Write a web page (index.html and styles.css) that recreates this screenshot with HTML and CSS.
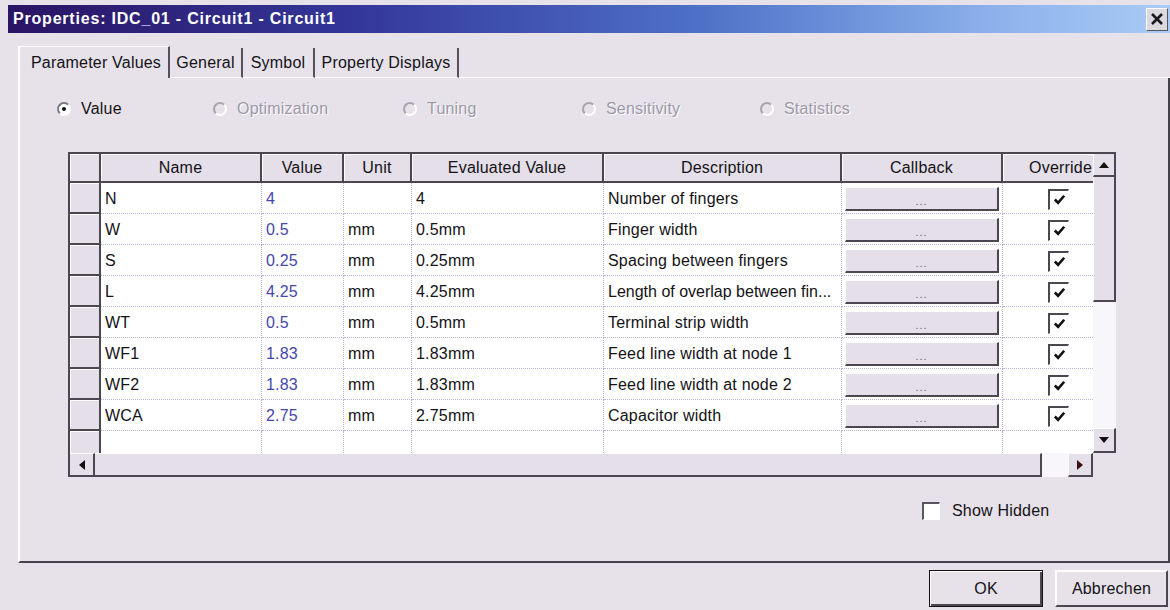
FILE: index.html
```html
<!DOCTYPE html>
<html>
<head>
<meta charset="utf-8">
<title>Properties: IDC_01 - Circuit1 - Circuit1</title>
<link rel="stylesheet" href="styles.css">
</head>
<body>
<div class="dialog">
  <div class="titlebar">
    <span class="title">Properties: IDC_01 - Circuit1 - Circuit1</span>
    <span class="close"><svg width="14" height="12" viewBox="0 0 14 12"><path d="M2 1 L12 11 M12 1 L2 11" stroke="#1a1a1a" stroke-width="2.6"/></svg></span>
  </div>

  <div class="tabs-area">
    <div class="tabstrip">
      <div class="tab tab-active">Parameter Values</div>
      <div class="tab tab-general">General</div>
      <div class="tab tab-symbol">Symbol</div>
      <div class="tab tab-displays">Property Displays</div>
      <div class="tab-rest"></div>
    </div>

    <div class="panel">
      <div class="radios">
        <label class="radio"><span class="dot on"></span><span class="rlabel">Value</span></label>
        <label class="radio off"><span class="dot"></span><span class="rlabel">Optimization</span></label>
        <label class="radio off"><span class="dot"></span><span class="rlabel">Tuning</span></label>
        <label class="radio off"><span class="dot"></span><span class="rlabel">Sensitivity</span></label>
        <label class="radio off"><span class="dot"></span><span class="rlabel">Statistics</span></label>
      </div>

      <div class="table-box">
        <div class="grid">
          <div class="hc corner"></div>
          <div class="hc">Name</div>
          <div class="hc">Value</div>
          <div class="hc">Unit</div>
          <div class="hc">Evaluated Value</div>
          <div class="hc">Description</div>
          <div class="hc">Callback</div>
          <div class="hc hc-last">Override</div>

          <div class="rh"></div><div class="c">N</div><div class="c val">4</div><div class="c"></div><div class="c">4</div><div class="c">Number of fingers</div><div class="c cb"><span class="btn">...</span></div><div class="c ov"><span class="chk"><svg viewBox="0 0 16 16"><path d="M3 8 L6.5 11.5 L13 4" fill="none" stroke="#111" stroke-width="2.8"/></svg></span></div>
          <div class="rh"></div><div class="c">W</div><div class="c val">0.5</div><div class="c">mm</div><div class="c">0.5mm</div><div class="c">Finger width</div><div class="c cb"><span class="btn">...</span></div><div class="c ov"><span class="chk"><svg viewBox="0 0 16 16"><path d="M3 8 L6.5 11.5 L13 4" fill="none" stroke="#111" stroke-width="2.8"/></svg></span></div>
          <div class="rh"></div><div class="c">S</div><div class="c val">0.25</div><div class="c">mm</div><div class="c">0.25mm</div><div class="c">Spacing between fingers</div><div class="c cb"><span class="btn">...</span></div><div class="c ov"><span class="chk"><svg viewBox="0 0 16 16"><path d="M3 8 L6.5 11.5 L13 4" fill="none" stroke="#111" stroke-width="2.8"/></svg></span></div>
          <div class="rh"></div><div class="c">L</div><div class="c val">4.25</div><div class="c">mm</div><div class="c">4.25mm</div><div class="c tight">Length of overlap between fin...</div><div class="c cb"><span class="btn">...</span></div><div class="c ov"><span class="chk"><svg viewBox="0 0 16 16"><path d="M3 8 L6.5 11.5 L13 4" fill="none" stroke="#111" stroke-width="2.8"/></svg></span></div>
          <div class="rh"></div><div class="c">WT</div><div class="c val">0.5</div><div class="c">mm</div><div class="c">0.5mm</div><div class="c">Terminal strip width</div><div class="c cb"><span class="btn">...</span></div><div class="c ov"><span class="chk"><svg viewBox="0 0 16 16"><path d="M3 8 L6.5 11.5 L13 4" fill="none" stroke="#111" stroke-width="2.8"/></svg></span></div>
          <div class="rh"></div><div class="c">WF1</div><div class="c val">1.83</div><div class="c">mm</div><div class="c">1.83mm</div><div class="c">Feed line width at node 1</div><div class="c cb"><span class="btn">...</span></div><div class="c ov"><span class="chk"><svg viewBox="0 0 16 16"><path d="M3 8 L6.5 11.5 L13 4" fill="none" stroke="#111" stroke-width="2.8"/></svg></span></div>
          <div class="rh"></div><div class="c">WF2</div><div class="c val">1.83</div><div class="c">mm</div><div class="c">1.83mm</div><div class="c">Feed line width at node 2</div><div class="c cb"><span class="btn">...</span></div><div class="c ov"><span class="chk"><svg viewBox="0 0 16 16"><path d="M3 8 L6.5 11.5 L13 4" fill="none" stroke="#111" stroke-width="2.8"/></svg></span></div>
          <div class="rh"></div><div class="c">WCA</div><div class="c val">2.75</div><div class="c">mm</div><div class="c">2.75mm</div><div class="c">Capacitor width</div><div class="c cb"><span class="btn">...</span></div><div class="c ov"><span class="chk"><svg viewBox="0 0 16 16"><path d="M3 8 L6.5 11.5 L13 4" fill="none" stroke="#111" stroke-width="2.8"/></svg></span></div>
          <div class="rh rh-last"></div><div class="c last"></div><div class="c last"></div><div class="c last"></div><div class="c last"></div><div class="c last"></div><div class="c last"></div><div class="c last ov"></div>
        </div>

        <div class="vscroll">
          <div class="sbtn"><svg width="10" height="6" viewBox="0 0 10 6"><path d="M0 6 L5 0 L10 6 Z" fill="#111"/></svg></div>
          <div class="vthumb"></div>
          <div class="vtrack"></div>
          <div class="sbtn"><svg width="10" height="6" viewBox="0 0 10 6"><path d="M0 0 L5 6 L10 0 Z" fill="#111"/></svg></div>
        </div>

        <div class="hscroll">
          <div class="sbtn sbtn-left"><svg width="6" height="10" viewBox="0 0 6 10"><path d="M6 0 L0 5 L6 10 Z" fill="#111"/></svg></div>
          <div class="hthumb"></div>
          <div class="htrack"></div>
          <div class="sbtn"><svg width="6" height="10" viewBox="0 0 6 10"><path d="M0 0 L6 5 L0 10 Z" fill="#3a1010"/></svg></div>
        </div>
        <div class="corner-fill"></div>
      </div>

      <div class="hidden-row">
        <span class="box"></span><span>Show Hidden</span>
      </div>
    </div>
  </div>

  <div class="footer">
    <button class="pbtn default">OK</button>
    <button class="pbtn">Abbrechen</button>
  </div>
</div>
</body>
</html>
```

FILE: styles.css
```css
html, body {
  margin: 0;
  padding: 0;
  background: #e7e2ea;
}

body {
  font-family: "Liberation Sans", Arial, sans-serif;
  font-size: 16px;
  letter-spacing: 0.2px;
  color: #141216;
}

.dialog {
  width: 1170px;
  height: 610px;
  display: flex;
  flex-direction: column;
  overflow: hidden;
}

/* caption bar */
.titlebar {
  margin: 5px 0 0 8px;
  height: 28px;
  display: flex;
  align-items: center;
  justify-content: space-between;
  background: linear-gradient(to right, #2a1464 0%, #33379a 30%, #4f72c8 60%, #8db2ec 85%, #aacbf5 100%);
}

.title {
  padding-left: 5px;
  color: #ffffff;
  font-weight: bold;
  font-size: 16px;
  letter-spacing: 0.8px;
}

.close {
  width: 20px;
  height: 21px;
  margin-right: 2px;
  display: flex;
  align-items: center;
  justify-content: center;
  background: #dcd8e0;
  border-top: 1px solid #ffffff;
  border-left: 1px solid #ffffff;
  border-right: 1px solid #5a5660;
  border-bottom: 1px solid #5a5660;
}

/* tab control */
.tabs-area {
  margin: 13px 0 0 18px;
  width: 1152px;
  display: flex;
  flex-direction: column;
}

.tabstrip {
  height: 32px;
  display: flex;
  align-items: stretch;
}

.tab {
  display: flex;
  align-items: center;
  justify-content: center;
  margin-top: 2px;
  border-right: 2px solid #55505a;
  border-bottom: 1px solid #ffffff;
  white-space: nowrap;
}

.tab-active {
  width: 152px;
  padding-left: 4px;
  margin-top: 0;
  border-left: 2px solid #ffffff;
  border-top: 1px solid #ffffff;
  border-bottom: none;
  box-sizing: border-box;
}

.tab-general { width: 71px; }
.tab-symbol { width: 70px; }
.tab-displays { width: 142px; }

.tab-rest {
  flex: 1;
  border-bottom: 1px solid #ffffff;
}

.panel {
  height: 483px;
  border-left: 2px solid #ffffff;
  border-right: 2px solid #45414a;
  border-bottom: 2px solid #45414a;
  display: flex;
  flex-direction: column;
}

/* mode radios */
.radios {
  margin: 22px 0 0 37px;
  height: 16px;
  display: grid;
  grid-template-columns: 156px 190px 179px 178px auto;
  align-items: center;
}

.radio {
  display: flex;
  align-items: center;
  gap: 10px;
}

.radio.off .rlabel {
  color: #9c98a8;
  text-shadow: 1px 1px 0 #ffffff;
}

.dot {
  width: 10px;
  height: 10px;
  border-radius: 50%;
  border: 2px solid;
  border-color: #7d7984 #ffffff #ffffff #7d7984;
  background: #f3f0f5;
  display: flex;
  align-items: center;
  justify-content: center;
}

.radio.off .dot {
  background: #e7e2ea;
  border-color: #a8a4b0 #ffffff #ffffff #a8a4b0;
}

.dot.on {
  background: #ffffff;
}

.dot.on::after {
  content: "";
  width: 4px;
  height: 4px;
  border-radius: 50%;
  background: #111111;
}

/* parameter grid */
.table-box {
  margin: 36px 0 0 48px;
  display: grid;
  grid-template-columns: 1025px 23px;
  grid-template-rows: 301px 24px;
  width: 1048px;
}

.grid {
  display: grid;
  grid-template-columns: 31px 161px 82px 68px 192px 238px 161px 90px;
  grid-template-rows: 29px repeat(8, 31px) 22px;
  background: #ffffff;
  border-top: 2px solid #4b4650;
  border-left: 2px solid #4b4650;
  box-sizing: border-box;
  overflow: hidden;
}

.hc {
  background: #e4dfe8;
  border-right: 2px solid #4b4650;
  border-bottom: 2px solid #4b4650;
  box-shadow: inset 1px 1px 0 #ffffff;
  display: flex;
  align-items: center;
  justify-content: center;
  white-space: nowrap;
  overflow: hidden;
}

.hc-last {
  border-right: none;
  justify-content: flex-end;
  padding-right: 1px;
}

.rh {
  background: #e4dfe8;
  border-right: 2px solid #4b4650;
  border-bottom: 2px solid #4b4650;
  box-shadow: inset 1px 1px 0 #ffffff;
}

.rh-last {
  border-bottom: none;
}

.c {
  background: #ffffff;
  border-right: 1px dotted #b8b6da;
  border-bottom: 1px dotted #b8b6da;
  padding-left: 4px;
  padding-right: 1px;
  display: block;
  line-height: 31px;
  white-space: nowrap;
  overflow: hidden;
  min-width: 0;
}

.c.tight {
  letter-spacing: 0;
}

.c.last {
  border-bottom: none;
}

.c.val {
  color: #4646ae;
}

.c.ov {
  border-right: none;
  padding-left: 45px;
  display: flex;
  align-items: center;
}

.c.cb {
  padding-left: 3px;
  display: flex;
  align-items: center;
}

.btn {
  width: 151px;
  height: 21px;
  background: #e4dfe8;
  border-top: 1px solid #ffffff;
  border-left: 1px solid #ffffff;
  border-right: 2px solid #4b4650;
  border-bottom: 2px solid #4b4650;
  display: flex;
  justify-content: center;
  align-items: flex-end;
  color: #6a6670;
  font-size: 11px;
  line-height: 16px;
  letter-spacing: 1px;
  margin-top: 2px;
}

.chk {
  width: 18px;
  height: 18px;
  border-top: 2px solid #4b4650;
  border-left: 2px solid #4b4650;
  border-right: 1px solid #ffffff;
  border-bottom: 1px solid #ffffff;
  background: #ffffff;
  display: flex;
  align-items: center;
  justify-content: center;
  margin-top: 2px;
}

.chk svg {
  width: 15px;
  height: 15px;
}

/* scrollbars */
.sbtn {
  background: #e4dfe8;
  border-top: 1px solid #ffffff;
  border-left: 1px solid #ffffff;
  border-right: 2px solid #4b4650;
  border-bottom: 2px solid #4b4650;
  display: flex;
  align-items: center;
  justify-content: center;
  box-sizing: border-box;
}

.vscroll {
  display: grid;
  grid-template-rows: 23px 125px 126px 25px;
  border-top: 2px solid #4b4650;
}

.vscroll .sbtn:first-child {
  border-top: none;
}

.vthumb {
  background: #e4dfe8;
  border-left: 1px solid #ffffff;
  border-right: 2px solid #4b4650;
  border-bottom: 2px solid #4b4650;
}

.vtrack {
  background: #f8f6fa;
}

.hscroll {
  display: grid;
  grid-template-columns: 25px 947px 26px 25px;
  border-left: 2px solid #4b4650;
}

.sbtn-left {
  border-left: none;
}

.hthumb {
  background: #e4dfe8;
  border-top: 1px solid #ffffff;
  border-right: 2px solid #4b4650;
  border-bottom: 2px solid #4b4650;
}

.htrack {
  background: #f8f6fa;
}

.corner-fill {
  background: transparent;
}

/* show hidden option */
.hidden-row {
  margin: 25px 0 0 902px;
  display: flex;
  align-items: center;
  gap: 12px;
}

.box {
  width: 15px;
  height: 15px;
  background: #ffffff;
  border-top: 2px solid #5a5660;
  border-left: 2px solid #5a5660;
  border-right: 1px solid #ffffff;
  border-bottom: 1px solid #ffffff;
}

/* dialog buttons */
.footer {
  margin: 7px 0 0 929px;
  display: flex;
  gap: 12px;
}

.pbtn {
  font-family: "Liberation Sans", Arial, sans-serif;
  font-size: 16px;
  letter-spacing: 0.2px;
  color: #141216;
  width: 113px;
  height: 37px;
  padding: 0;
  background: #e7e2ea;
  border-top: 2px solid #ffffff;
  border-left: 2px solid #ffffff;
  border-right: 2px solid #4b4650;
  border-bottom: 2px solid #4b4650;
  box-sizing: border-box;
}

.pbtn.default {
  width: 114px;
  border: 1px solid #111111;
  box-shadow: inset 1px 1px 0 #ffffff, inset -2px -2px 0 #4b4650;
}
```
